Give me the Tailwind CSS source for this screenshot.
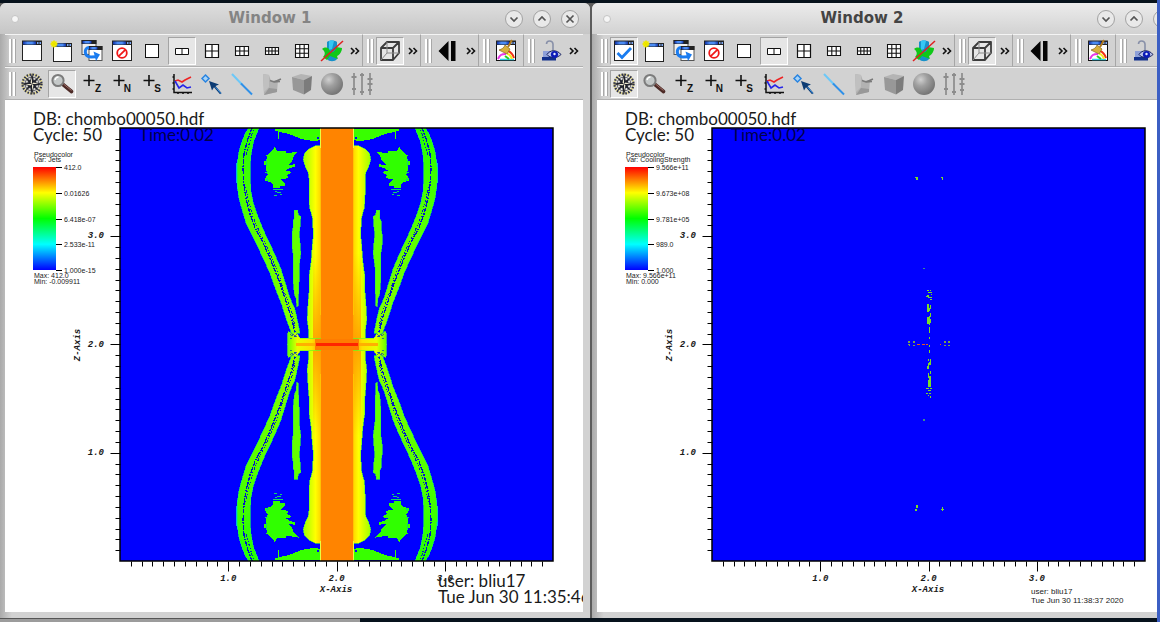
<!DOCTYPE html>
<html lang="en">
<head>
  <meta charset="UTF-8" />
  <title>VisIt</title>
  <script src="https://cdn.jsdelivr.net/npm/@tailwindcss/browser@4"></script>
</head>
<body class="relative h-screen overflow-hidden bg-[#07121c] flex flex-col pt-[3px]">

  <!-- icons -->
  <svg class="absolute size-0">
    <defs>
      <linearGradient id="bar" x1="0" x2="1"><stop offset="0" stop-color="#1232a8"/><stop offset=".35" stop-color="#4b8cf5"/><stop offset=".7" stop-color="#4b8cf5"/><stop offset="1" stop-color="#1232a8"/></linearGradient>
      <radialGradient id="ball" cx=".35" cy=".3" r=".75"><stop offset="0" stop-color="#d0d0d0"/><stop offset=".4" stop-color="#a0a0a0"/><stop offset="1" stop-color="#727272"/></radialGradient>
      <linearGradient id="legend" x1="0" y1="0" x2="0" y2="1">
        <stop offset="0" stop-color="#ff0000"/><stop offset=".25" stop-color="#ffff00"/><stop offset=".5" stop-color="#00ff00"/><stop offset=".75" stop-color="#00ffff"/><stop offset="1" stop-color="#0000ff"/>
      </linearGradient>
      <linearGradient id="shell" gradientUnits="userSpaceOnUse" x1="0" y1="24" x2="0" y2="660">
        <stop offset="0" stop-color="#24ff00"/><stop offset=".35" stop-color="#4cff00"/><stop offset="1" stop-color="#8cff00"/>
      </linearGradient>
      <linearGradient id="cocoon" gradientUnits="userSpaceOnUse" x1="250" y1="0" x2="306" y2="0">
        <stop offset="0" stop-color="#a0ff00"/><stop offset=".4" stop-color="#d8ff00"/><stop offset=".65" stop-color="#ffff00"/><stop offset=".88" stop-color="#ffdc00"/><stop offset="1" stop-color="#ffa000"/>
      </linearGradient>
      <linearGradient id="heat" gradientUnits="userSpaceOnUse" x1="0" y1="400" x2="0" y2="673">
        <stop offset="0" stop-color="#ff9800" stop-opacity="0"/><stop offset="1" stop-color="#ff9800" stop-opacity=".9"/>
      </linearGradient>
      <linearGradient id="disk" gradientUnits="userSpaceOnUse" x1="203" y1="0" x2="300" y2="0">
        <stop offset="0" stop-color="#60ff00"/><stop offset=".3" stop-color="#e8ff00"/><stop offset=".75" stop-color="#ffe000"/><stop offset="1" stop-color="#ff9a00"/>
      </linearGradient>
    </defs>

    <symbol id="i-window" viewBox="0 0 24 24">
      <rect x="2.5" y="2.5" width="19" height="19" fill="#fff" stroke="#222"/><rect x="2" y="1.5" width="20" height="4.500" fill="#222"/><rect x="3" y="2.500" width="13" height="3" fill="url(#bar)"/><path d="M17 4h1.500M19.500 4h1.500" stroke="#7ba6f2" stroke-width="2"/>
    </symbol>
    <symbol id="i-check" viewBox="0 0 24 24">
      <use href="#i-window"/><path d="M5.500 14l4.500 4.500 9-9.500" fill="none" stroke="#1a7cf0" stroke-width="2.800"/>
    </symbol>
    <symbol id="i-new" viewBox="0 0 24 24">
      <rect x="3.500" y="4.500" width="18" height="18" fill="#fff" stroke="#222"/><rect x="3" y="4" width="19" height="4" fill="#222"/><rect x="4" y="4.500" width="12" height="3" fill="url(#bar)"/><path d="M17 6h1.500M19.500 6H21" stroke="#7ba6f2" stroke-width="2"/>
      <circle cx="4" cy="5" r="3" fill="#f6f000"/><path d="M4 1v8M0 5h8M1.500 2.500l5 5M6.500 2.500l-5 5" stroke="#e8e000" stroke-width=".8"/>
    </symbol>
    <symbol id="i-clone" viewBox="0 0 24 24">
      <rect x="2" y="1.500" width="14" height="14" fill="#eee" stroke="#555"/><rect x="1.500" y="1" width="15" height="4" fill="#222"/><rect x="2.500" y="2" width="9" height="2.500" fill="url(#bar)"/>
      <rect x="9" y="7.500" width="13" height="14" fill="#fff" stroke="#555"/><rect x="8.500" y="7" width="14" height="4" fill="#222"/><rect x="9.500" y="8" width="8" height="2.500" fill="url(#bar)"/>
      <path d="M9 8.500c-5 0-5.500 9 2 9.500l5-.3" fill="none" stroke="#1a7cf0" stroke-width="3"/><path d="M13.500 12.500l6.500 3-4 6.500z" fill="#1a7cf0"/>
    </symbol>
    <symbol id="i-delete" viewBox="0 0 24 24">
      <use href="#i-window"/><circle cx="12" cy="14" r="4.800" fill="none" stroke="#f01818" stroke-width="1.800"/><path d="M8.500 17.300l7-6.600" stroke="#f01818" stroke-width="1.800"/>
    </symbol>
    <symbol id="i-l1" viewBox="0 0 24 24"><rect x="5.500" y="5.500" width="13" height="13" fill="#fff" stroke="#111"/></symbol>
    <symbol id="i-l2" viewBox="0 0 24 24"><path d="M5.500 9.500h13v6h-13zM12 9.500v6" fill="#fff" stroke="#111"/></symbol>
    <symbol id="i-l4" viewBox="0 0 24 24"><path d="M5.500 5.500h13v13h-13zM12 5.500v13M5.500 12h13" fill="#fff" stroke="#111" stroke-width="1.200"/></symbol>
    <symbol id="i-l6" viewBox="0 0 24 24"><path d="M5.500 7.500h13v9h-13zM9.800 7.500v9M14.200 7.500v9M5.500 12h13" fill="#fff" stroke="#111" stroke-width="1.100"/></symbol>
    <symbol id="i-l8" viewBox="0 0 24 24"><path d="M5.500 8.500h13v7h-13zM8.750 8.500v7M12 8.500v7M15.250 8.500v7M5.500 12h13" fill="#fff" stroke="#111" stroke-width="1.100"/></symbol>
    <symbol id="i-l9" viewBox="0 0 24 24"><path d="M5.500 5.500h13v13h-13zM9.800 5.500v13M14.200 5.500v13M5.500 9.800h13M5.500 14.200h13" fill="#fff" stroke="#111" stroke-width="1.100"/></symbol>
    <symbol id="i-nospin" viewBox="0 0 24 24">
      <path d="M7 3c2-2 8-2 10 0v17c-2 3-8 3-10 0z" fill="#1791c9"/><path d="M9 2c2-1 4-1 5 0l-2 8-3 1z" fill="#35c7f4"/>
      <path d="M2 10c4-3 8-1 8 3 3 1 6-1 6-5l6 1c0 3-2 7-5 8l1 3-8-3-3 4-4-3c2-2 3-5-1-8z" fill="#10c818"/><path d="M1 22L23 2" stroke="#e02020" stroke-width="1.500"/>
    </symbol>
    <symbol id="i-cube" viewBox="0 0 24 24">
      <path d="M3 9h12v12H3zM3 9l6-6h12l-6 6M21 3v11l-6 7" fill="none" stroke="#3c3c3c" stroke-width="1.800" stroke-linejoin="round"/><path d="M9 3v11h12M9 14l-6 7" fill="none" stroke="#8a8a8a"/>
    </symbol>
    <symbol id="i-back" viewBox="0 0 24 24"><path d="M12.500 2v20L2.500 12zM15 2h4.500v20H15z" fill="#050505"/></symbol>
    <symbol id="i-clear" viewBox="0 0 24 24">
      <rect x="2.500" y="2.500" width="19" height="19" fill="#fff" stroke="#111"/><path d="M2 1.500h20v4.500H2z" fill="#222"/><rect x="3" y="2.500" width="12" height="3" fill="url(#bar)"/><path d="M17 4h1.500M19.500 4H21" stroke="#7ba6f2" stroke-width="2"/>
      <path d="M4 20c2-4 3-5 8-5" fill="none" stroke="#e838e8" stroke-width="2"/><path d="M6 20.500h14" stroke="#2fd0f0" stroke-width="1.500"/><path d="M14 12c3 1 5 4 6 7" fill="none" stroke="#f23018" stroke-width="2"/><path d="M13 15c3 0 4 2 5 5" fill="none" stroke="#f6e820" stroke-width="2"/><path d="M11 17l4 3" stroke="#22d020" stroke-width="2"/>
      <path d="M18 1l-4 7" stroke="#b07a20" stroke-width="2"/><path d="M11 6l5 4-3 5-8-4c3-1 5-2 6-5z" fill="#d9b03c" stroke="#8a6418" stroke-width=".7"/>
    </symbol>
    <symbol id="i-lock" viewBox="0 0 24 24">
      <path d="M7.500 5c0-4 6-4 6.500 0v7" fill="none" stroke="#8890a8" stroke-width="1.600"/><path d="M4 12h13v9H4z" fill="#8ea0d8"/><path d="M3 18h14v3.500H3z" fill="#12308c"/><path d="M8 15.500c3-5 10-5 14 0-4 4-11 4-14 0z" fill="#b8c2ea" stroke="#16205c" stroke-width="1"/><circle cx="15.500" cy="15.500" r="3.600" fill="#0c1cb8"/><circle cx="15.500" cy="15" r="1.200" fill="#e8ecff"/>
    </symbol>

    <symbol id="i-compass" viewBox="0 0 24 24">
      <circle cx="12" cy="12" r="9.500" fill="none" stroke="#e2d890" stroke-width="2.200"/><circle cx="12" cy="12" r="9.500" fill="none" stroke="#2c3050" stroke-width="2.200" stroke-dasharray="1.500 1.500"/><circle cx="12" cy="12" r="7" fill="none" stroke="#555" stroke-width="1"/>
      <path d="M12 1l1.800 7.500L19 5l-3.500 5.200L23 12l-7.500 1.800L19 19l-5.200-3.500L12 23l-1.800-7.500L5 19l3.500-5.200L1 12l7.500-1.800L5 5l5.200 3.500z" fill="#20222c"/><path d="M12 5l-1.500 5.500L12 12zM19 12l-5.500-1.500L12 12zM12 19l1.500-5.500L12 12zM5 12l5.500 1.500L12 12z" fill="#f0ead0"/>
    </symbol>
    <symbol id="i-zoom" viewBox="0 0 24 24">
      <path d="M13 12.500l8.500 7" stroke="#4c2a26" stroke-width="3.600" stroke-linecap="round"/><path d="M13.500 12l8 6.500" stroke="#a07068" stroke-width="1"/><circle cx="8" cy="8.500" r="5.600" fill="#c4c8c8" stroke="#7c7c7c" stroke-width="2"/><path d="M5 8c.5-2 2-3 3.500-3" fill="none" stroke="#fff" stroke-width="1.400"/>
    </symbol>
    <symbol id="i-plus" viewBox="0 0 24 24"><path d="M9 3v11M3.500 8.500h11" stroke="#111" stroke-width="1.600"/></symbol>
    <symbol id="i-lineout" viewBox="0 0 24 24">
      <path d="M4 2v18.500h18M2.500 5H4M2.500 11H4M2.500 17H4M8 20v2M13 20v2M18 20v2" fill="none" stroke="#111" stroke-width="1.500"/><path d="M5 9l3-1 4 2 3-2 6-3" fill="none" stroke="#ee2424" stroke-width="1.600"/><path d="M5 9l4 7 4-3 4 3 4-1" fill="none" stroke="#2626e8" stroke-width="1.600"/>
    </symbol>
    <symbol id="i-pick" viewBox="0 0 24 24">
      <path d="M5.500 3L9 6.500 5.500 10 2 6.500z" fill="#a8d4f8" stroke="#2a84e0" stroke-width="1.500"/><path d="M9 9l10 3.500-3.500 1.500 6 7-1.500 1.300-6-7-2 3.200z" fill="#0d3c74"/><path d="M15.500 15l5.500 6.500" stroke="#3a90e0"/>
    </symbol>
    <symbol id="i-line" viewBox="0 0 24 24"><path d="M2 2l10 10.500" stroke="#6cc8f8" stroke-width="2"/><path d="M11 11.500l11 11" stroke="#2f90e8" stroke-width="2"/></symbol>
    <symbol id="i-plane" viewBox="0 0 24 24">
      <path d="M3 2l6 1 2 6 7-1-1 12-13 3z" fill="#b2b2b2"/><path d="M3 2l6 1v12l-5 5z" fill="#c0c0c0"/><path d="M10 8.500l4 1.500 7-3M14 10l6-.5" fill="none" stroke="#7a7a7a" stroke-width="1.500"/><path d="M4 23l5-7 8 1v3z" fill="#989898"/>
    </symbol>
    <symbol id="i-box" viewBox="0 0 24 24">
      <path d="M2 5l9-3 11 2-8 4z" fill="#b4b4b4"/><path d="M2 5l12 3v14.500L3 18z" fill="#989898"/><path d="M14 8l8-4-1 14-7 4.500z" fill="#7c7c7c"/>
    </symbol>
    <symbol id="i-sphere" viewBox="0 0 24 24"><circle cx="12" cy="12" r="11" fill="url(#ball)"/></symbol>
    <symbol id="i-axes" viewBox="0 0 24 24">
      <path d="M4 1v22M12 1v22M20 1v22" stroke="#8c8c8c" stroke-width="1.700"/><path d="M1.500 5h5M2 17h4M10 3h4M10 20h4M17.500 7h5M17.500 12h5M18 18h4" stroke="#8c8c8c" stroke-width="2"/>
    </symbol>

    <!-- one quadrant of the jet, mirrored three times -->
    <g id="quadrant" shape-rendering="crispEdges">
      <path d="M49 130v60M52 120v86" stroke="#00b4e0" stroke-width="4"/>
      <path d="M85 24L74 45 64 70 56 100 51 140 51 190 57 235 68 275 78 308 96 345 112 378 130 415 150 460 166 505 184 550 200 600 215 640 240 640 232 600 224 565 210 535 196 490 182 445 165 405 148 368 130 330 112 285 100 250 93 215 90 170 92 110 100 66 117 24z" fill="url(#shell)" stroke="#18f060" stroke-width="2"/>
      <path d="M96 24L84 56 72 100 69 145 72 195 78 235 90 282 106 325 128 365 146 405 162 445 182 495 200 550 214 592 226 640" fill="none" stroke="#0014c8" stroke-width="4" stroke-dasharray="13 4 5 3 20 4"/>
      <path d="M100 30L90 62 79 105M77 200L86 245 99 290 118 335 142 382 160 425 180 475 194 520 214 570 225 620" fill="none" stroke="#0028b8" stroke-width="3" stroke-dasharray="4 6 8 5 3 4"/>
      <path d="M120 26h45v7h10v25h2V36l23 4 25 9 20 8 28 5h27V26z" fill="#38ff00"/>
      <path d="M165 80l5 12h25l5 8 36-6-14 14-6 15-12 12 20-2 4 6-20 6-14 9h14l6 5-12 6 2 8-14 5h-8l13 12v8h-16v7h-18l-3-13-8-6-15-4 2-12 6-6-4-12-2-16h-4v-12h10l-4-18 10-6z" fill="#30ff00"/>
      <path d="M160 208l28 0M164 215l20 3M162 226h8M180 224h6M140 118v20M136 156h8M138 175l8 8" stroke="#10d868" stroke-width="3"/>
      <path d="M222 270h11l2 16 7 3-2 33-3 20 3 26 2 32-5 42v45l-3 70-4 3-1-22-6-16-3-37v-80l-4-30v-32l3-20v-20l4-8z" fill="#64ff00" stroke="#30f040" stroke-width="2"/>
      <path d="M302 24v53l-18 1-16 8-14 14-4 18 6 22 9 18 2 16v50l2 38 9 34 2 52-3 28-3 46-6 44-1 52-3 40-2 40 4 32v26h74V24" fill="url(#cocoon)" stroke="#58ff30" stroke-width="2"/>
      <path d="M280 400h24v273h-24z" fill="url(#heat)"/>
      <path d="M203 676V640l3-6 10 8 12-6 12 18 64 2v20" fill="url(#disk)" stroke="#60ff20" stroke-width="2"/>
      <path d="M303 24v60" stroke="#e8ff40" stroke-width="4"/><path d="M302 84v500" stroke="#ffc400" stroke-width="4"/>
      <path d="M304 24h48v652h-48z" fill="#ff8400"/>
      <path d="M292 50h6v6h-6zM295 60h5v12h-5z" fill="#0000ff"/>
      <path d="M212 642l4 7 4-8 5 9 6-9M210 655h7M222 650h10" fill="none" stroke="#0030c0" stroke-width="2"/>
      <path d="M228 669h64v6h-64z" fill="#ffb000"/><path d="M286 658h66v17h-66z" fill="#ff7c00"/><path d="M289 670h63v5h-63z" fill="#ff2400"/>
    </g>
  </svg>

  <main id="desktop" class="flex flex-1 min-h-0 gap-[2px] bg-[#5c5c5c]"></main>
  <div class="h-[4px] flex"><div class="w-[31%] bg-[#9c9c9c] border-t border-[#555]"></div></div>
  <div class="absolute inset-y-0 right-0 w-[3px] bg-[#3c5fc4]"></div>

  <script>
    const windows = [
      {
        title: "Window 1", active: false, pressed: ["zoom", "l2", "cube"], first: "window",
        variable: "Jets", labels: ["412.0", "0.01626", "6.418e-07", "2.533e-11", "1.000e-15"],
        max: "412.0", min: "-0.009911", time: "11:35:46", plot: drawJet, bigUser: true
      },
      {
        title: "Window 2", active: true, pressed: ["check", "compass", "l2", "cube"], first: "check",
        variable: "CoolingStrength", labels: ["9.566e+11", "9.673e+08", "9.781e+05", "989.0", "1.000"],
        max: "9.566e+11", min: "0.000", time: "11:38:37", plot: drawCooling, bigUser: false
      }
    ];

    // plot area inside the canvas
    const LEFT = 115, TOP = 28, SIZE = 433, UNIT = SIZE / 4;

    function iconButton(name, win) {
      const on = win.pressed.includes(name);
      const look = on
        ? "border border-[#a4a4a4] border-r-white border-b-white bg-[#e6e6e6]"
        : "border border-transparent";
      const letter = name.startsWith("plus") ? name.slice(4) : "";
      const icon = letter ? "plus" : name;
      return `<button aria-label="${name}" class="relative size-7 shrink-0 flex items-center justify-center ${look}">
        <svg class="size-6 shrink-0"><use href="#i-${icon}"/></svg>
        ${letter ? `<span class="absolute right-1 bottom-1 text-[10px] leading-[8px] font-bold text-[#111]">${letter}</span>` : ""}
      </button>`;
    }

    const grip = `<div class="w-[7px] h-6 shrink-0 flex gap-px"><i class="w-[3px] border-l-2 border-r border-l-white border-r-[#a8a8a8]"></i><i class="w-[3px] border-l-2 border-r border-l-white border-r-[#a8a8a8]"></i></div>`;
    const more = `<button aria-label="more" class="w-[13px] h-7 shrink-0 flex items-center justify-center"><svg class="w-[10px] h-2" viewBox="0 0 10 8"><path d="M1 1l3 3-3 3M5.500 1l3 3-3 3" fill="none" stroke="#111" stroke-width="1.600"/></svg></button>`;

    function toolbar(names, win, hasMore, last) {
      const edge = last ? "flex-1" : hasMore ? "border-r border-r-[#a6a6a6] pr-px" : "border-r border-r-[#a6a6a6] pr-[3px]";
      return `<div class="flex items-center gap-[2px] pl-1 h-[33px] border-t border-t-[#f4f4f4] border-b border-b-[#b0b0b0] ${edge}">
        ${grip}${names.map(n => iconButton(n, win)).join("")}${hasMore ? more : ""}
      </div>`;
    }

    function titleButton(label, d) {
      return `<button aria-label="${label}" class="size-[18px] rounded-full border border-[#a2a2a2] bg-[#e9e9e9] flex items-center justify-center">
        <svg class="size-3" viewBox="0 0 12 12"><path d="${d}" fill="none" stroke="#555" stroke-width="1.700"/></svg></button>`;
    }

    function drawAxes() {
      let d = "";
      for (let i = 1; i < 40; i++) {
        const pos = Math.round(i * UNIT / 10);
        const len = i % 10 ? 5 : 10;
        d += `M${LEFT + pos} ${TOP + SIZE}v${len}M${LEFT} ${TOP + SIZE - pos}h${-len}`;
      }
      let text = "";
      for (const n of [1, 2, 3]) {
        text += `<text x="${LEFT + n * UNIT}" y="481" text-anchor="middle">${n}.0</text>`;
        text += `<text x="99" y="${Math.round(TOP + SIZE - n * UNIT) + 2}" text-anchor="end">${n}.0</text>`;
      }
      return `<path d="${d}" stroke="#000" stroke-width="1" transform="translate(.5 .5)"/>
        <rect x="${LEFT}" y="${TOP}" width="${SIZE}" height="${SIZE}" fill="none" stroke="#000" stroke-width="1.500"/>
        <g class="font-['Liberation_Mono',monospace] text-[9px] font-bold italic">${text}
          <text x="331" y="492" text-anchor="middle">X-Axis</text>
          <text transform="translate(75 245) rotate(-90)" text-anchor="middle">Z-Axis</text>
        </g>`;
    }

    function drawJet() {
      return `<svg x="${LEFT}" y="${TOP}" width="${SIZE}" height="${SIZE}" viewBox="-300 24 1299 1299">
        <use href="#quadrant"/>
        <use href="#quadrant" transform="translate(702 0) scale(-1 1)"/>
        <use href="#quadrant" transform="translate(0 1347) scale(1 -1)"/>
        <use href="#quadrant" transform="translate(702 1347) scale(-1 -1)"/>
      </svg>`;
    }

    function drawCooling() {
      return `<g transform="translate(283 60) scale(.3333)" fill="none" shape-rendering="crispEdges" stroke="#78dc28" stroke-width="4">
        <path d="M104 53h9M107 57h6M182 53h8M185 57h5M182 1048h10M187 1042v12M104 1050h6M111 1036v8"/>
        <path d="M129 326h5M129 780h5" stroke="#3c8c8c"/>
        <path d="M142 392h4M150 392h4M143 398h12M140 406h8M152 404h5M143 412h12M139 410h8M150 419h7"/>
        <path d="M144 432v24M151 434v12M148 444v10M151 458v14M144 470v12M149 468v28M144 484v8M152 478v10M148 502v18M148 530v6M148 556v6M148 570v8M146 596v6M151 598v8M146 608v12M150 606v10M144 618v8M151 632v10M145 640v14M150 648v32M145 660v22M152 664v8"/>
        <path d="M139 686h8M150 685h7M144 692h8M139 700h6M148 700h6M144 706h4M149 711h5"/>
        <path d="M85 546h6M84 553h5M87 557h4M99 546h5M99 556h5M192 546h5M192 556h5M205 546h5M205 556h5" stroke="#78a050"/>
        <path d="M110 553h6M117 553h3M126 553h8M138 553h6M179 553h4" stroke="#e85a20"/>
      </g>`;
    }

    function canvas(win) {
      const ys = [67, 93, 119, 144, 170];
      const user = win.bigUser
        ? `<g class="text-[17px]"><text x="433" y="487">user: bliu17</text><text x="433" y="503">Tue Jun 30 ${win.time} 2020</text></g>`
        : `<g class="text-[8px] font-['Liberation_Sans',sans-serif]"><text x="434" y="494">user: bliu17</text><text x="434" y="503">Tue Jun 30 ${win.time} 2020</text></g>`;
      return `<svg class="block flex-1 min-h-0 w-full bg-white overflow-hidden font-['Lato',sans-serif]" fill="#1a1a1a">
        <rect x="${LEFT}" y="${TOP}" width="${SIZE}" height="${SIZE}" fill="#0000ff"/>
        ${win.plot()}
        ${drawAxes()}
        <g class="text-[17px]">
          <text x="28" y="25">DB: chombo00050.hdf</text>
          <text x="28" y="41">Cycle: 50</text>
          <text x="134" y="41" fill="#00004c">Time:0.02</text>
        </g>
        <g class="text-[7px] font-['Liberation_Sans',sans-serif]">
          <text x="29" y="57">Pseudocolor</text>
          <text x="29" y="62">Var: ${win.variable}</text>
          ${win.labels.map((l, i) => `<path d="M51 ${ys[i]}.5h6" stroke="#000"/><text x="59" y="${ys[i] + 3}">${l}</text>`).join("")}
          <text x="29" y="178">Max: ${win.max}</text>
          <text x="29" y="184">Min: ${win.min}</text>
        </g>
        <rect x="28" y="67" width="23" height="103" fill="url(#legend)"/>
        ${user}
      </svg>`;
    }

    document.getElementById("desktop").innerHTML = windows.map(win => `
      <section class="w-[calc(50%+10px)] shrink-0 flex flex-col bg-[#d2d2d2] rounded-t-md overflow-hidden">
        <header class="h-[31px] shrink-0 flex items-center px-[11px] bg-linear-to-b ${win.active ? "from-[#ececec] to-[#d2d2d2]" : "from-[#dedede] to-[#c6c6c6]"}">
          <span class="size-2 rounded-full bg-[#f6f6f6] border border-[#c4c4c4]"></span>
          <h1 class="flex-1 pl-4 text-center text-[15px] font-bold font-['DejaVu_Sans',sans-serif] ${win.active ? "text-[#444]" : "text-[#848484]"}">${win.title}</h1>
          <div class="flex gap-[10px]">
            ${titleButton("minimize", "M2.500 4.500L6 8l3.500-3.500")}
            ${titleButton("maximize", "M2.500 7.500L6 4l3.500 3.500")}
            ${titleButton("close", "M2.500 2.500l7 7M9.500 2.500l-7 7")}
          </div>
        </header>
        <div class="flex-1 min-h-0 flex flex-col pl-[5px] pr-[7px] pb-[6px] bg-linear-to-r from-[#aaa] via-[#d2d2d2] via-2% to-[#d2d2d2] font-['Liberation_Sans',sans-serif]">
          <div class="flex shrink-0">
            ${toolbar([win.first, "new", "clone", "delete", "l1", "l2", "l4", "l6", "l8", "l9", "nospin"], win, true)}
            ${toolbar(["cube"], win, true)}
            ${toolbar(["back"], win, true)}
            ${toolbar(["clear"], win, false)}
            ${toolbar(["lock"], win, true, true)}
          </div>
          <div class="flex shrink-0">
            ${toolbar(["compass", "zoom", "plusZ", "plusN", "plusS", "lineout", "pick", "line", "plane", "box", "sphere", "axes"], win, false, true)}
          </div>
          ${canvas(win)}
        </div>
      </section>`).join("");
  </script>
</body>
</html>
